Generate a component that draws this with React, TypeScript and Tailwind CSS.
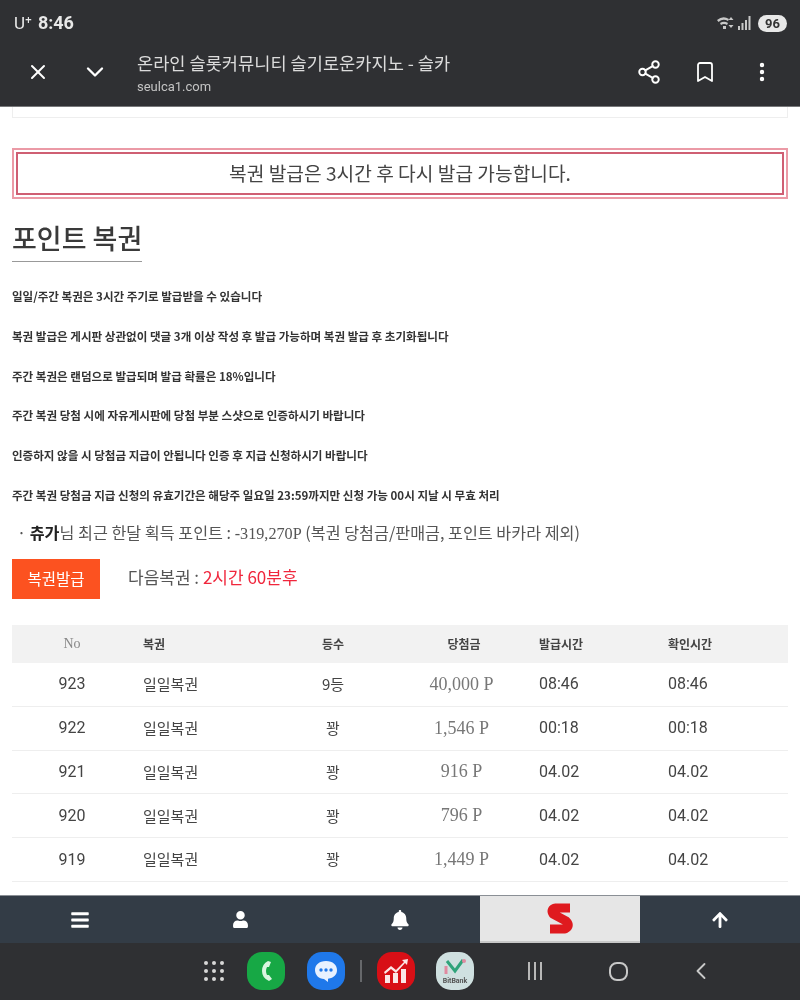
import { X, ChevronDown, Share2, Bookmark, MoreVertical, ChevronLeft } from "lucide-react";
import { FaBars, FaUser, FaBell, FaArrowUp } from "react-icons/fa";

const KR = "font-['Noto_Sans_CJK_KR','Noto_Sans',sans-serif]";
const SERIF = "font-['Liberation_Serif','Noto_Sans_CJK_KR',serif]";

const notices = [
  "일일/주간 복권은 3시간 주기로 발급받을 수 있습니다",
  "복권 발급은 게시판 상관없이 댓글 3개 이상 작성 후 발급 가능하며 복권 발급 후 초기화됩니다",
  "주간 복권은 랜덤으로 발급되며 발급 확률은 18%입니다",
  "주간 복권 당첨 시에 자유게시판에 당첨 부분 스샷으로 인증하시기 바랍니다",
  "인증하지 않을 시 당첨금 지급이 안됩니다 인증 후 지급 신청하시기 바랍니다",
  "주간 복권 당첨금 지급 신청의 유효기간은 해당주 일요일 23:59까지만 신청 가능 00시 지날 시 무효 처리",
];

const rows = [
  { no: 923, name: "일일복권", rank: "9등", prize: "40,000 P", issued: "08:46", checked: "08:46" },
  { no: 922, name: "일일복권", rank: "꽝", prize: "1,546 P", issued: "00:18", checked: "00:18" },
  { no: 921, name: "일일복권", rank: "꽝", prize: "916 P", issued: "04.02", checked: "04.02" },
  { no: 920, name: "일일복권", rank: "꽝", prize: "796 P", issued: "04.02", checked: "04.02" },
  { no: 919, name: "일일복권", rank: "꽝", prize: "1,449 P", issued: "04.02", checked: "04.02" },
];

const gridCols = "grid grid-cols-[120px_138px_126px_136px_128px_128px] items-center";

function StatusBar() {
  return (
    <div className="h-[46px] flex items-center justify-between pl-[14px] pr-[13px] text-[#e8e8e8]">
      <div className="flex items-baseline gap-[6px]">
        <span className="text-[17px] font-['Roboto',sans-serif]">U⁺</span>
        <span className="text-[18px] font-bold font-['Roboto',sans-serif]">8:46</span>
      </div>
      <div className="flex items-center gap-[6px]">
        <svg width="35" height="16" viewBox="0 0 35 16" fill="#c8c8c8">
          <path d="M0 5 Q6 0 12 4 L11 6 Q6 3 1.500 7Z" />
          <path d="M3 8 Q7 5.500 11 8 L10 10 Q7 8 4 10Z" />
          <path d="M6 11h3v3h-3z" />
          <path d="M14 2l2.500 3h-5zM14 13l-2.500-3h5z" />
          <rect x="21" y="11" width="2" height="4" />
          <rect x="24.500" y="8" width="2" height="7" />
          <rect x="28" y="5" width="2" height="10" />
          <rect x="31.500" y="1" width="2" height="14" />
        </svg>
        <span className="w-[29px] h-[17px] rounded-full bg-[#e8e8e8] text-[#333] text-[13px] font-bold leading-[17px] text-center font-['Roboto',sans-serif]">
          96
        </span>
      </div>
    </div>
  );
}

function Toolbar() {
  return (
    <div className="h-[61px] flex items-start text-white border-b border-[#77787a]">
      <div className="w-[137px] h-[52px] flex items-center pl-[26px] gap-[31px]">
        <X size={24} strokeWidth={2} />
        <ChevronDown size={28} strokeWidth={2} />
      </div>
      <div className="flex-1 pt-[4px]">
        <div className={`${KR} text-[17.600px] leading-[26px] text-[#dcdcdc]`}>온라인 슬롯커뮤니티 슬기로운카지노 - 슬카</div>
        <div className="font-['Roboto',sans-serif] text-[13px] leading-[18px] mt-[2px] text-[#c4c4c4]">seulca1.com</div>
      </div>
      <div className="h-[52px] flex items-center pr-[26px]">
        <Share2 size={26} strokeWidth={1.8} />
        <Bookmark size={24} strokeWidth={1.8} className="ml-[31px]" />
        <MoreVertical size={24} strokeWidth={2.4} className="ml-[33px]" />
      </div>
    </div>
  );
}

function LotteryTable() {
  return (
    <div className={`mt-[26px] ${KR}`}>
      <div className={`${gridCols} h-[38px] bg-[#f2f2f2] text-[12px] font-bold text-[#444]`}>
        <div className={`${SERIF} text-center text-[14px] font-normal text-[#888]`}>No</div>
        <div className="pl-[11px]">복권</div>
        <div className="text-center">등수</div>
        <div className="text-center">당첨금</div>
        <div className="pl-[7px]">발급시간</div>
        <div className="pl-[8px]">확인시간</div>
      </div>
      {rows.map((row) => (
        <div key={row.no} className={`${gridCols} h-[43.800px] border-b border-[#eeeeee] text-[15px] text-[#444]`}>
          <div className="text-center font-['Roboto',sans-serif] text-[16px]">{row.no}</div>
          <div className="pl-[11px]">{row.name}</div>
          <div className="text-center">{row.rank}</div>
          <div className={`${SERIF} text-center pr-[5px] text-[18px] text-[#777]`}>{row.prize}</div>
          <div className="pl-[7px] font-['Roboto',sans-serif] text-[16px]">{row.issued}</div>
          <div className="pl-[8px] font-['Roboto',sans-serif] text-[16px]">{row.checked}</div>
        </div>
      ))}
    </div>
  );
}

function BottomNav() {
  return (
    <div className="h-[48px] shrink-0 grid grid-cols-[160px_160px_160px_160px_160px] bg-[#333c46] text-white border-t border-[#8a8f95]">
      <div className="flex items-center justify-center"><FaBars size={20} /></div>
      <div className="flex items-center justify-center"><FaUser size={17} /></div>
      <div className="flex items-center justify-center"><FaBell size={20} /></div>
      <div className="flex items-center justify-center bg-[#e6e6e6] border-b-2 border-[#c8c8c8]">
        <svg width="30" height="33" viewBox="0 0 30 33" fill="none">
          <path
            d="M25 6 L11 6 Q5 7 8 12 L21 19 Q26 24 20 27 L5 27"
            stroke="#df1a1f"
            strokeWidth="9"
            strokeLinejoin="round"
          />
        </svg>
      </div>
      <div className="flex items-center justify-center"><FaArrowUp size={18} /></div>
    </div>
  );
}

function AppIcon({ className, children }: { className: string; children: React.ReactNode }) {
  return <div className={`w-[38px] h-[38px] rounded-[15px] flex items-center justify-center ${className}`}>{children}</div>;
}

function SystemNav() {
  return (
    <div className="h-[57px] shrink-0 flex items-center bg-[#2f3033] pl-[204px] pb-[1px]">
      <div className="grid grid-cols-3 gap-x-[4px] gap-y-[4px] w-[20px] mr-[23px]">
        {Array.from({ length: 9 }).map((_, i) => (
          <span key={i} className="w-[4px] h-[4px] rounded-full bg-[#d8d8d8]" />
        ))}
      </div>
      <AppIcon className="bg-[#17a845]">
        <svg width="14" height="22" viewBox="0 0 14 22">
          <path d="M9 1 L12 2 L10 7 L8 7 Q6 11 8 15 L10 15 L13 19 L10 21 Q3 18 3 11 Q3 4 9 1Z" fill="#d9f5e0" />
        </svg>
      </AppIcon>
      <AppIcon className="bg-[#1f78ea] ml-[22px]">
        <svg width="26" height="24" viewBox="0 0 26 24">
          <path d="M13 2C6 2 2 6 2 11s4 9 9 9l4 3 0-3.200C21 19 24 15.500 24 11 24 6 20 2 13 2Z" fill="#e8f1ff" />
          <circle cx="8" cy="11" r="1.700" fill="#1f78ea" />
          <circle cx="13" cy="11" r="1.700" fill="#1f78ea" />
          <circle cx="18" cy="11" r="1.700" fill="#1f78ea" />
        </svg>
      </AppIcon>
      <div className="w-[2px] h-[22px] bg-[#66686b] mx-[15px]" />
      <AppIcon className="bg-[#d80f16]">
        <svg width="28" height="26" viewBox="0 0 28 26" fill="#fbe6e6">
          <rect x="3" y="17" width="5" height="8" />
          <rect x="11" y="15" width="5" height="10" />
          <rect x="19" y="11" width="5" height="14" />
          <path d="M2 14l7-6 5 4 8-8-2-2 6-1-1 6-2-2-9 10-5-4-6 5z" />
        </svg>
      </AppIcon>
      <AppIcon className="bg-[#cfe0e0] ml-[21px] flex-col">
        <svg width="28" height="20" viewBox="0 0 28 20" fill="none">
          <path d="M6 4l8 10 8-11" stroke="#2fa37a" strokeWidth="3" />
          <path d="M5 9v8" stroke="#e08aa0" strokeWidth="3" />
          <circle cx="23" cy="4" r="2" fill="#e08aa0" />
        </svg>
        <span className="text-[7px] leading-[8px] font-bold text-[#555] font-['Roboto',sans-serif]">BitBank</span>
      </AppIcon>
      <div className="ml-[54px] flex gap-[4px]">
        <span className="w-[2px] h-[18px] bg-[#b8b8b8]" />
        <span className="w-[2px] h-[18px] bg-[#b8b8b8]" />
        <span className="w-[2px] h-[18px] bg-[#b8b8b8]" />
      </div>
      <div className="ml-[67px] w-[19px] h-[19px] rounded-[8px] border-2 border-[#c8c8c8]" />
      <ChevronLeft size={28} strokeWidth={1.6} className="ml-[59px] text-[#c8c8c8]" />
    </div>
  );
}

export default function App() {
  return (
    <div className="w-[800px] h-[1000px] flex flex-col bg-white overflow-hidden blur-[0.6px]">
      <div className="bg-[#2f3033] shrink-0">
        <StatusBar />
        <Toolbar />
      </div>

      <main className={`flex-1 overflow-hidden px-[12px] ${KR}`}>
        <div className="h-[11px] border border-t-0 border-[#eeeeee]" />

        <div className="mt-[30px] h-[51px] border-2 border-[#eb9aa6] p-[2px]">
          <div className="h-full border-2 border-[#cf5f73] flex items-center justify-center text-[19.200px] text-[#444]">
            복권 발급은 3시간 후 다시 발급 가능합니다.
          </div>
        </div>

        <div className="mt-[20px] block w-fit border-b border-[#999] text-[27px] leading-[38px] pb-[4px] font-medium text-[#3a3a3a]">
          포인트 복권
        </div>

        <div className="mt-[24px] flex flex-col gap-[19.800px]">
          {notices.map((text) => (
            <p key={text} className="text-[11.550px] leading-[20px] font-bold text-[#333]">{text}</p>
          ))}
        </div>

        <div className="mt-[15px] pl-[5px] text-[16.200px] leading-[24px] text-[#555]">
          · <b className="text-[#222]">츄가</b>님 최근 한달 획득 포인트 : <span className={SERIF}>-319,270P</span> (복권 당첨금/판매금, 포인트 바카라 제외)
        </div>

        <div className="mt-[13px] flex items-center">
          <button className="w-[88px] h-[40px] bg-[#fc5220] text-white text-[15.500px]">복권발급</button>
          <div className="ml-[28px] mb-[4px] text-[17px] text-[#555]">
            다음복권 : <span className="text-[#f0263c]">2시간 60분후</span>
          </div>
        </div>

        <LotteryTable />
      </main>

      <BottomNav />
      <SystemNav />
    </div>
  );
}
